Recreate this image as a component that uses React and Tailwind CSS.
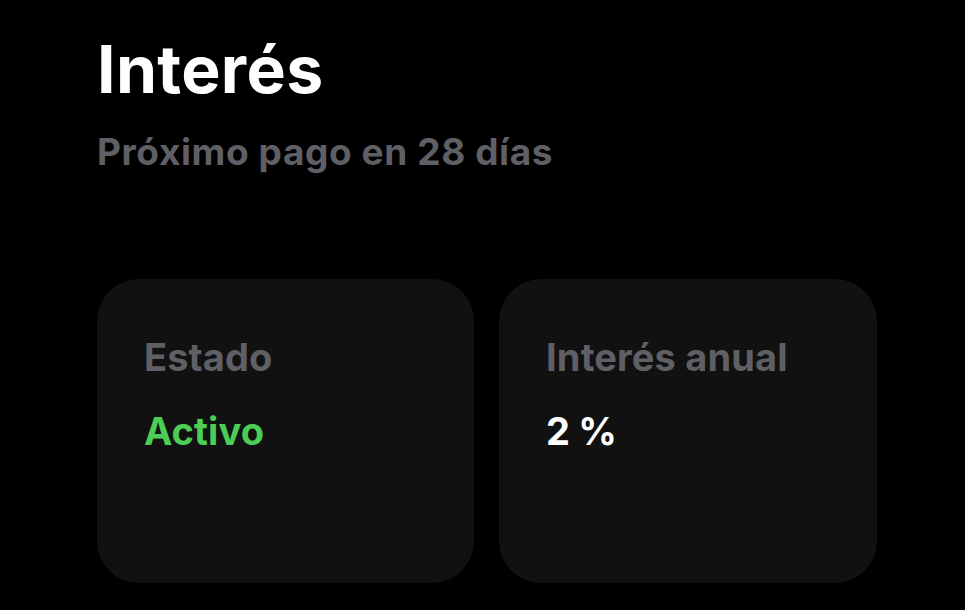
export default function App() {
  return (
    <div className="w-[965px] h-[610px] bg-black overflow-hidden" style={{ fontFamily: 'Inter, "Noto Sans", sans-serif' }}>
      <div className="pl-[97px] pt-[36px]">
        <h1 className="text-[66px] leading-none font-bold text-white tracking-[0.35px]">Interés</h1>
        <p className="mt-[31px] text-[37px] leading-none font-bold text-[#5f5f66] tracking-[0.6px]">Próximo pago en 28 días</p>
        <div className="mt-[109px] flex gap-[25px]">
          <div className="w-[377px] h-[304px] rounded-[42px] bg-[#111111] pl-[47px] pt-[59px]">
            <div className="text-[38px] leading-none font-bold text-[#5f5f66] tracking-[0.1px]">Estado</div>
            <div className="mt-[36px] text-[38px] leading-none font-bold text-[#4ccd55] tracking-[0.1px]">Activo</div>
          </div>
          <div className="w-[378px] h-[304px] rounded-[42px] bg-[#111111] pl-[47px] pt-[59px]">
            <div className="text-[38px] leading-none font-bold text-[#5f5f66] tracking-[0.15px]">Interés anual</div>
            <div className="mt-[36px] text-[38px] leading-none font-bold text-white tracking-[-0.3px]">2 %</div>
          </div>
        </div>
      </div>
    </div>
  );
}
